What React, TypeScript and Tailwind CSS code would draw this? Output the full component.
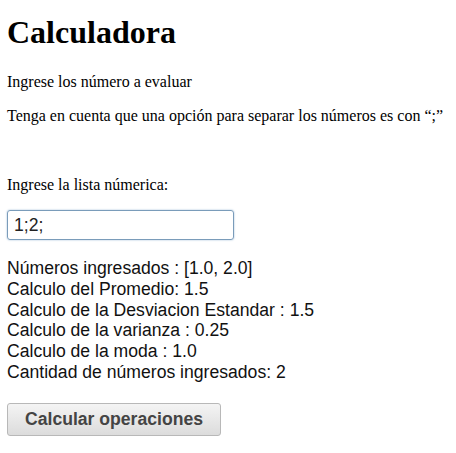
export default function App() {
  const serif = { fontFamily: '"Liberation Serif", "Times New Roman", serif' };
  return (
    <div className="bg-white text-black px-[7px] pt-[14px]" style={serif}>
      <h1 className="text-[32px] font-bold leading-[37px] m-0">Calculadora</h1>
      <p className="text-[16px] leading-[18px] mt-[22px]">Ingrese los número a evaluar</p>
      <p className="text-[16px] leading-[18px] mt-[16px]">Tenga en cuenta que una opción para separar los números es con “;”</p>
      <p className="text-[16px] leading-[18px] mt-[51px]">Ingrese la lista númerica:</p>
      <div className="mt-[16px]">
        <input
          defaultValue="1;2;"
          className="w-[227px] h-[30px] px-[6px] text-[17.6px] text-[#222] border border-[#7a9cba] rounded-[3px] shadow-[0_0_2px_#9ab7d4] outline-none font-['Liberation_Sans',Arial,sans-serif]"
        />
      </div>
      <div className="mt-[18px] text-[17.6px] leading-[20.8px] text-[#111] font-['Liberation_Sans',Arial,sans-serif]">
        <div>Números ingresados : [1.0, 2.0]</div>
        <div>Calculo del Promedio: 1.5</div>
        <div>Calculo de la Desviacion Estandar : 1.5</div>
        <div>Calculo de la varianza : 0.25</div>
        <div>Calculo de la moda : 1.0</div>
        <div>Cantidad de números ingresados: 2</div>
      </div>
      <button className="mt-[20px] w-[214px] h-[33px] rounded-[3px] border border-[#b8b8b8] bg-gradient-to-b from-[#f4f4f4] to-[#dcdcdc] text-[17.6px] font-bold text-[#444] font-['Liberation_Sans',Arial,sans-serif]">
        Calcular operaciones
      </button>
    </div>
  );
}
